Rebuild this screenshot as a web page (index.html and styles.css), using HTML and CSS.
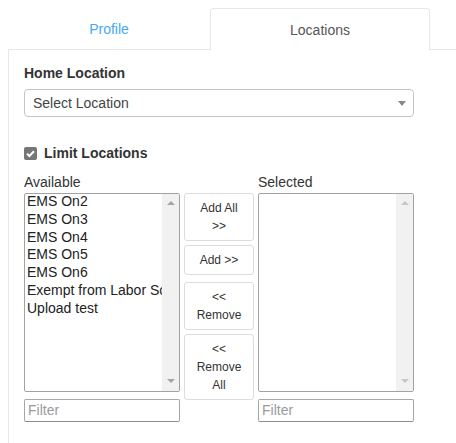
FILE: index.html
```html
<!DOCTYPE html>
<html>
<head>
<meta charset="utf-8">
<link rel="stylesheet" href="styles.css">
</head>
<body>
<div class="tabs">
  <div class="tab tab-profile">Profile</div>
  <div class="tab tab-active">Locations</div>
</div>
<div class="panel">
  <div class="field-label">Home Location</div>
  <div class="select">
    <span class="select-text">Select Location</span>
    <span class="caret"></span>
  </div>
  <div class="check-row">
    <span class="checkbox">
      <svg width="13" height="13" viewBox="0 0 13 13"><path d="M3 6.6 L5.4 9 L10 4.2" fill="none" stroke="#fff" stroke-width="2"/></svg>
    </span>
    <span class="check-label">Limit Locations</span>
  </div>
  <div class="dual">
    <div class="side">
      <div class="side-label">Available</div>
      <div class="listbox">
        <div class="items">
          <div class="item">EMS On2</div>
          <div class="item">EMS On3</div>
          <div class="item">EMS On4</div>
          <div class="item">EMS On5</div>
          <div class="item">EMS On6</div>
          <div class="item">Exempt from Labor Sc</div>
          <div class="item">Upload test</div>
        </div>
        <div class="scrollbar">
          <span class="arrow-up"></span>
          <span class="arrow-down"></span>
        </div>
      </div>
      <div class="filter">Filter</div>
    </div>
    <div class="buttons">
      <div class="btn">Add All<br>&gt;&gt;</div>
      <div class="btn btn-add">Add &gt;&gt;</div>
      <div class="btn">&lt;&lt;<br>Remove</div>
      <div class="btn">&lt;&lt;<br>Remove<br>All</div>
    </div>
    <div class="side">
      <div class="side-label">Selected</div>
      <div class="listbox">
        <div class="items"></div>
        <div class="scrollbar disabled">
          <span class="arrow-up"></span>
          <span class="arrow-down"></span>
        </div>
      </div>
      <div class="filter">Filter</div>
    </div>
  </div>
</div>
</body>
</html>
```
FILE: styles.css
```css
html {
  overflow: hidden;
  background: #fff;
}
body {
  margin: 8px 0 0 8px;
  font-family: "Liberation Sans", Arial, sans-serif;
  font-size: 14px;
  color: #333;
}
.tabs {
  display: flex;
  height: 41px;
}
.tab {
  display: flex;
  align-items: center;
  justify-content: center;
  font-size: 14px;
  box-sizing: border-box;
}
.tab-profile {
  width: 202px;
  color: #45a9f2;
}
.tab-active {
  width: 220px;
  color: #555;
  background: #fff;
  border: 1px solid #e6e6e6;
  border-bottom: none;
  border-radius: 4px 4px 0 0;
  height: 42px;
  position: relative;
  z-index: 1;
}
.panel {
  width: 448px;
  height: 394px;
  border-top: 1px solid #e6e6e6;
  border-left: 1px solid #e6e6e6;
  padding: 13px 15px 0 15px;
  box-sizing: border-box;
}
.field-label {
  font-weight: bold;
  line-height: 20px;
  color: #333;
}
.select {
  margin-top: 6px;
  width: 390px;
  height: 28px;
  box-sizing: border-box;
  border: 1px solid #c4c4c4;
  border-radius: 4px;
  display: flex;
  align-items: center;
  justify-content: space-between;
  padding: 0 7px 0 8px;
  color: #444;
}
.caret {
  width: 0;
  height: 0;
  border-left: 4px solid transparent;
  border-right: 4px solid transparent;
  border-top: 5px solid #888;
  margin-top: 1px;
}
.check-row {
  margin-top: 26px;
  display: flex;
  align-items: center;
  height: 20px;
}
.checkbox {
  width: 13px;
  height: 13px;
  border-radius: 2px;
  background: #767676;
  display: inline-flex;
  margin-right: 7px;
}
.check-label {
  font-weight: bold;
  color: #333;
}
.dual {
  margin-top: 10px;
  display: flex;
  gap: 4px;
  align-items: flex-start;
}
.side {
  width: 156px;
  display: flex;
  flex-direction: column;
}
.side-label {
  line-height: 18px;
  margin-bottom: 2px;
  color: #333;
}
.listbox {
  height: 199px;
  box-sizing: border-box;
  border: 1px solid #a2a2a2;
  border-radius: 2px;
  display: flex;
  overflow: hidden;
}
.items {
  flex: 1;
  overflow: hidden;
  padding: 0 0 0 2px;
  margin-top: -1px;
}
.item {
  line-height: 17.8px;
  white-space: nowrap;
  color: #222;
}
.scrollbar {
  width: 17px;
  background: #f1f1f1;
  display: flex;
  flex-direction: column;
  justify-content: space-between;
  align-items: center;
  padding: 7px 0 8px 0;
  box-sizing: border-box;
}
.arrow-up {
  width: 0;
  height: 0;
  border-left: 4px solid transparent;
  border-right: 4px solid transparent;
  border-bottom: 4px solid #a3a3a3;
}
.arrow-down {
  width: 0;
  height: 0;
  border-left: 4px solid transparent;
  border-right: 4px solid transparent;
  border-top: 4px solid #a3a3a3;
}
.disabled .arrow-up {
  border-bottom-color: #c6c6c6;
}
.disabled .arrow-down {
  border-top-color: #c6c6c6;
}
.filter {
  margin-top: 7px;
  height: 23px;
  box-sizing: border-box;
  border: 1px solid #a6a6a6;
  border-bottom-color: #8c8c8c;
  border-radius: 2px;
  padding-left: 3px;
  line-height: 21px;
  color: #9a9a9a;
}
.buttons {
  margin-top: 20px;
  width: 70px;
  display: flex;
  flex-direction: column;
  gap: 4px;
}
.btn {
  box-sizing: border-box;
  border: 1px solid #dcdcdc;
  border-radius: 3px;
  background: #fff;
  font-size: 12px;
  line-height: 18px;
  padding: 5px 0;
  text-align: center;
  color: #333;
}
.btn-add {
  margin-bottom: 3px;
}
```
